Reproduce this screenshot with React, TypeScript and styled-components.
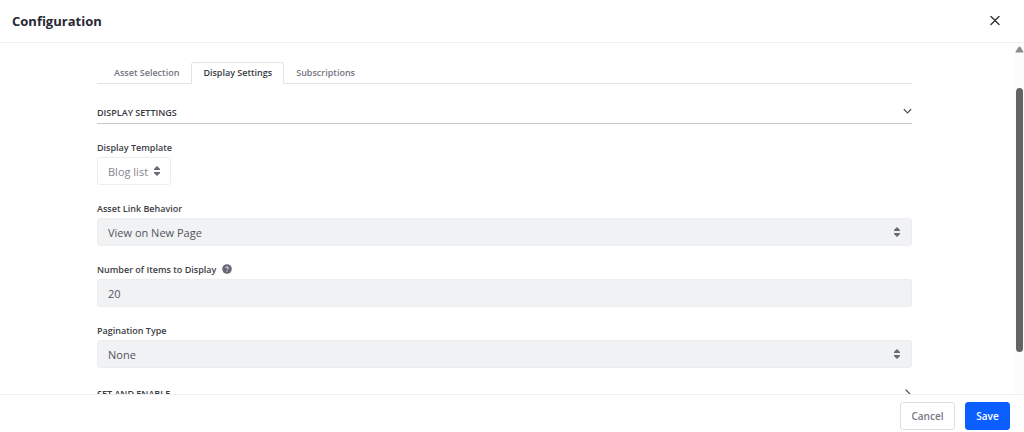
import React from "react";
import styled, { createGlobalStyle } from "styled-components";

const GlobalStyle = createGlobalStyle`
  *, *::before, *::after { box-sizing: border-box; }
  body {
    margin: 0;
    background: #fff;
    color: #46474f;
    font-family: "Open Sans", "Noto Sans", sans-serif;
    font-size: 11px;
  }
  button, input, select { font: inherit; color: inherit; margin: 0; }
`;

const Modal = styled.div`
  display: flex;
  flex-direction: column;
  height: 100vh;
`;

const Header = styled.header`
  display: flex;
  flex: none;
  align-items: center;
  justify-content: space-between;
  height: 43px;
  padding: 0 24px 0 12px;
  border-bottom: 1px solid #f0f0f2;
`;

const Title = styled.h1`
  margin: 0;
  color: #272833;
  font-size: 13px;
  font-weight: 700;
  line-height: 20px;
`;

const IconButton = styled.button`
  display: grid;
  place-items: center;
  padding: 0;
  border: 0;
  background: none;
`;

const Body = styled.div`
  display: flex;
  flex: 1;
  min-height: 0;
`;

const Content = styled.main`
  flex: 1;
  min-width: 0;
  overflow: hidden;
  padding: 19px 103px 0 97px;
`;

const Tabs = styled.div`
  display: flex;
  height: 22px;
  box-shadow: inset 0 -1px 0 #e2e2e5;
  margin-bottom: 18px;
  padding-left: 5px;
`;

const Tab = styled.button<{ $active?: boolean }>`
  padding: 0 11px;
  border: 1px solid ${(p) => (p.$active ? "#e2e2e5" : "transparent")};
  border-bottom-color: ${(p) => (p.$active ? "#fff" : "transparent")};
  border-radius: 3px 3px 0 0;
  background: ${(p) => (p.$active ? "#fff" : "transparent")};
  color: ${(p) => (p.$active ? "#3a3b42" : "#74757f")};
  font-size: 9px;
  font-weight: 600;
  line-height: 20px;
`;

const SectionButton = styled.button`
  display: flex;
  align-items: center;
  justify-content: space-between;
  width: 100%;
  height: 22px;
  margin-bottom: 15px;
  padding: 0;
  border: 0;
  border-bottom: 1px solid #c6c7cb;
  background: none;
  color: #393a42;
  font-size: 9px;
  font-weight: 600;
  text-transform: uppercase;
`;

const Field = styled.div`
  margin-bottom: 15px;
`;

const LabelRow = styled.div`
  display: flex;
  align-items: center;
  gap: 6px;
  height: 18px;
`;

const Label = styled.label`
  color: #3d3e45;
  font-size: 9px;
  font-weight: 600;
  line-height: 18px;
`;

const SelectWrap = styled.div<{ $compact?: boolean }>`
  display: ${(p) => (p.$compact ? "inline-block" : "block")};
  position: relative;
  vertical-align: top;

  svg {
    position: absolute;
    top: 9px;
    right: ${(p) => (p.$compact ? "10px" : "11px")};
    pointer-events: none;
  }
`;

const Select = styled.select<{ $compact?: boolean }>`
  display: block;
  width: ${(p) => (p.$compact ? "74px" : "100%")};
  height: 28px;
  padding: 0 10px;
  appearance: none;
  border: 1px solid ${(p) => (p.$compact ? "#ececef" : "#ebedef")};
  border-radius: 3px;
  background: ${(p) => (p.$compact ? "#fff" : "#f0f2f4")};
  color: ${(p) => (p.$compact ? "#85868d" : "#54555d")};
`;

const Input = styled.input`
  display: block;
  width: 100%;
  height: 28px;
  padding: 0 10px;
  border: 1px solid #ebedef;
  border-radius: 3px;
  background: #f0f2f4;
  color: #54555d;
`;

const Scrollbar = styled.div`
  display: flex;
  flex: none;
  flex-direction: column;
  align-items: center;
  width: 9px;
  padding-top: 3px;
  background: #fcfcfc;
`;

const Thumb = styled.div`
  width: 7px;
  height: 76%;
  margin-top: 35px;
  border-radius: 4px;
  background: #646464;
`;

const Footer = styled.footer`
  display: flex;
  flex: none;
  justify-content: flex-end;
  gap: 10px;
  height: 38px;
  padding: 7px 14px 0 0;
  border-top: 1px solid #f0f0f2;
`;

const Button = styled.button<{ $primary?: boolean }>`
  height: 28px;
  padding: 0 10px;
  min-width: ${(p) => (p.$primary ? "45px" : "55px")};
  border: 1px solid ${(p) => (p.$primary ? "#0b5fff" : "#dddee3")};
  border-radius: 3px;
  background: ${(p) => (p.$primary ? "#0b5fff" : "#fff")};
  color: ${(p) => (p.$primary ? "#fff" : "#777882")};
  font-size: 10px;
  font-weight: 600;
`;

const Sorter = () => (
  <svg width="8" height="10" viewBox="0 0 8 10" fill="#696a76" aria-hidden="true">
    <path d="M3.4 0.4Q4 0 4.6 0.4L7 3Q7.4 4 6.6 4H1.4Q0.6 4 1 3Z" />
    <path d="M3.4 9.6Q4 10 4.6 9.6L7 7Q7.4 6 6.6 6H1.4Q0.6 6 1 7Z" />
  </svg>
);

const Chevron = ({ open }: { open?: boolean }) => (
  <svg width="9" height="9" viewBox="0 0 9 9" fill="none" stroke="#50515a" strokeWidth="1.2" strokeLinecap="round" aria-hidden="true">
    <path d={open ? "M1.2 1.5L4.5 4.8L7.8 1.5" : "M3 1L6.5 4.5L3 8"} />
  </svg>
);

const Help = () => (
  <svg width="10" height="12" viewBox="0 0 10 12" role="img" aria-label="Help">
    <circle cx="5" cy="5" r="4.8" fill="#686978" />
    <path d="M3.7 4Q3.8 2.8 5 2.8Q6.3 2.8 6.3 3.9Q6.3 4.6 5.5 5Q5 5.3 5 5.8" fill="none" stroke="#e8e8ec" strokeWidth="1" />
    <circle cx="5" cy="7.3" r="0.6" fill="#e8e8ec" />
  </svg>
);

export default function App() {
  return (
    <>
      <GlobalStyle />
      <Modal role="dialog" aria-labelledby="title">
        <Header>
          <Title id="title">Configuration</Title>
          <IconButton aria-label="Close">
            <svg width="10" height="10" viewBox="0 0 10 10" stroke="#33343b" strokeWidth="1.4" strokeLinecap="round" aria-hidden="true">
              <path d="M1 0.5L9 8.5M9 0.5L1 8.5" />
            </svg>
          </IconButton>
        </Header>
        <Body>
          <Content>
            <Tabs role="tablist">
              <Tab role="tab" aria-selected={false}>Asset Selection</Tab>
              <Tab role="tab" aria-selected $active>Display Settings</Tab>
              <Tab role="tab" aria-selected={false}>Subscriptions</Tab>
            </Tabs>
            <SectionButton aria-expanded>
              Display Settings
              <Chevron open />
            </SectionButton>
            <Field>
              <LabelRow><Label htmlFor="template">Display Template</Label></LabelRow>
              <SelectWrap $compact>
                <Select id="template" $compact><option>Blog list</option></Select>
                <Sorter />
              </SelectWrap>
            </Field>
            <Field>
              <LabelRow><Label htmlFor="behavior">Asset Link Behavior</Label></LabelRow>
              <SelectWrap>
                <Select id="behavior"><option>View on New Page</option></Select>
                <Sorter />
              </SelectWrap>
            </Field>
            <Field>
              <LabelRow>
                <Label htmlFor="items">Number of Items to Display</Label>
                <Help />
              </LabelRow>
              <Input id="items" type="text" defaultValue="20" />
            </Field>
            <Field>
              <LabelRow><Label htmlFor="pagination">Pagination Type</Label></LabelRow>
              <SelectWrap>
                <Select id="pagination"><option>None</option></Select>
                <Sorter />
              </SelectWrap>
            </Field>
            <SectionButton aria-expanded={false}>
              Set and Enable
              <Chevron />
            </SectionButton>
          </Content>
          <Scrollbar aria-hidden="true">
            <svg width="9" height="7" viewBox="0 0 9 7" fill="#8b8b8b">
              <path d="M3.8 0.8Q4.5 0 5.2 0.8L8.3 5.6Q8.6 6.6 7.8 6.6H1.2Q0.4 6.6 0.7 5.6Z" />
            </svg>
            <Thumb />
          </Scrollbar>
        </Body>
        <Footer>
          <Button>Cancel</Button>
          <Button $primary>Save</Button>
        </Footer>
      </Modal>
    </>
  );
}
